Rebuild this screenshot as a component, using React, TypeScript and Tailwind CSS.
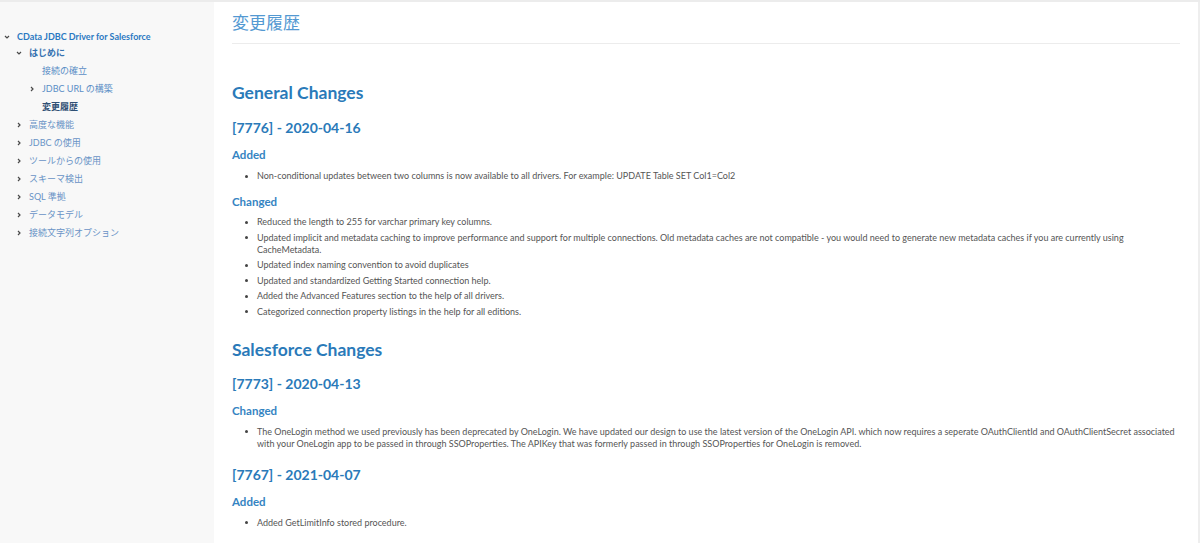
import React from "react";

const FONT = { fontFamily: 'Lato, "Noto Sans CJK JP", sans-serif' };

type NavItem = { label: string; level: number; chevron?: "down" | "right"; bold?: boolean; tone: string };

const nav: NavItem[] = [
  { label: "CData JDBC Driver for Salesforce", level: 0, chevron: "down", bold: true, tone: "text-[#2b79c2]" },
  { label: "はじめに", level: 1, chevron: "down", bold: true, tone: "text-[#3572b0]" },
  { label: "接続の確立", level: 2, tone: "text-[#5b8ec6]" },
  { label: "JDBC URL の構築", level: 2, chevron: "right", tone: "text-[#5b8ec6]" },
  { label: "変更履歴", level: 2, bold: true, tone: "text-[#2f4f74]" },
  { label: "高度な機能", level: 1, chevron: "right", tone: "text-[#6893c6]" },
  { label: "JDBC の使用", level: 1, chevron: "right", tone: "text-[#6893c6]" },
  { label: "ツールからの使用", level: 1, chevron: "right", tone: "text-[#6893c6]" },
  { label: "スキーマ検出", level: 1, chevron: "right", tone: "text-[#6893c6]" },
  { label: "SQL 準拠", level: 1, chevron: "right", tone: "text-[#6893c6]" },
  { label: "データモデル", level: 1, chevron: "right", tone: "text-[#6893c6]" },
  { label: "接続文字列オプション", level: 1, chevron: "right", tone: "text-[#6893c6]" },
];

const Chevron = ({ dir }: { dir: "down" | "right" }) => (
  <svg width="6" height="6" viewBox="0 0 6 6" className="shrink-0">
    {dir === "down" ? (
      <path d="M1 2 L3 4 L5 2" fill="none" stroke="#4a4a4a" strokeWidth="1.2" />
    ) : (
      <path d="M2 1 L4 3 L2 5" fill="none" stroke="#4a4a4a" strokeWidth="1.2" />
    )}
  </svg>
);

const indent = ["pl-[4px]", "pl-[16px]", "pl-[29px]"];

const Sidebar = () => (
  <aside className="w-[214px] shrink-0 bg-[#f8f8f8] pt-[26px]">
    {nav.map((n, i) => (
      <div
        key={i}
        className={`flex items-center h-[18px] text-[9px] ${indent[n.level]} ${i === 1 ? "mt-[-2px]" : ""} ${n.tone} ${n.bold ? "font-bold" : ""}`}
      >
        <span className="w-[13px] flex items-center">{n.chevron && <Chevron dir={n.chevron} />}</span>
        <span className="whitespace-nowrap">{n.label}</span>
      </div>
    ))}
  </aside>
);

const Bullets = ({ items, className = "" }: { items: string[]; className?: string }) => (
  <ul className={`pl-[13px] space-y-[3.5px] text-[9px] leading-[12px] text-[#555] ${className}`}>
    {items.map((t, i) => (
      <li key={i} className="flex">
        <span className="w-[12px] shrink-0 flex items-center h-[12px]">
          <span className="w-[3px] h-[3px] rounded-full bg-[#444]" />
        </span>
        <span>{t}</span>
      </li>
    ))}
  </ul>
);

const H2 = ({ children, className = "" }: { children: React.ReactNode; className?: string }) => (
  <h2 className={`text-[17.5px] leading-[24px] font-bold text-[#2a7ab9] ${className}`}>{children}</h2>
);
const H3 = ({ children, className = "" }: { children: React.ReactNode; className?: string }) => (
  <h3 className={`text-[14px] leading-[20px] font-bold text-[#2a7ab9] ${className}`}>{children}</h3>
);
const H4 = ({ children, className = "" }: { children: React.ReactNode; className?: string }) => (
  <h4 className={`text-[11.5px] leading-[16px] font-bold text-[#3584c2] ${className}`}>{children}</h4>
);

export default function App() {
  return (
    <div style={FONT} className="w-[1200px] h-[543px] overflow-hidden bg-white border-t-2 border-[#ececec] flex">
      <Sidebar />
      <main className="flex-1 pl-[18px] pr-[18px] border-r-2 border-[#eeeeee]">
        <h1 className="pt-[8px] text-[17px] leading-[26px] text-[#5399d2] mb-[7px]">変更履歴</h1>
        <div className="h-px bg-[#ececec]" />

        <H2 className="mt-[37px]">General Changes</H2>
        <H3 className="mt-[13px]">[7776] - 2020-04-16</H3>
        <H4 className="mt-[9px]">Added</H4>
        <Bullets
          className="mt-[7px]"
          items={["Non-conditional updates between two columns is now available to all drivers. For example: UPDATE Table SET Col1=Col2"]}
        />
        <H4 className="mt-[12px]">Changed</H4>
        <Bullets
          className="mt-[6px]"
          items={[
            "Reduced the length to 255 for varchar primary key columns.",
            "Updated implicit and metadata caching to improve performance and support for multiple connections. Old metadata caches are not compatible - you would need to generate new metadata caches if you are currently using CacheMetadata.",
            "Updated index naming convention to avoid duplicates",
            "Updated and standardized Getting Started connection help.",
            "Added the Advanced Features section to the help of all drivers.",
            "Categorized connection property listings in the help for all editions.",
          ]}
        />

        <H2 className="mt-[20px]">Salesforce Changes</H2>
        <H3 className="mt-[12px]">[7773] - 2020-04-13</H3>
        <H4 className="mt-[9px]">Changed</H4>
        <Bullets
          className="mt-[7px]"
          items={[
            "The OneLogin method we used previously has been deprecated by OneLogin. We have updated our design to use the latest version of the OneLogin API. which now requires a seperate OAuthClientId and OAuthClientSecret associated with your OneLogin app to be passed in through SSOProperties. The APIKey that was formerly passed in through SSOProperties for OneLogin is removed.",
          ]}
        />
        <H3 className="mt-[15px]">[7767] - 2021-04-07</H3>
        <H4 className="mt-[9px]">Added</H4>
        <Bullets className="mt-[7px]" items={["Added GetLimitInfo stored procedure."]} />
      </main>
    </div>
  );
}
